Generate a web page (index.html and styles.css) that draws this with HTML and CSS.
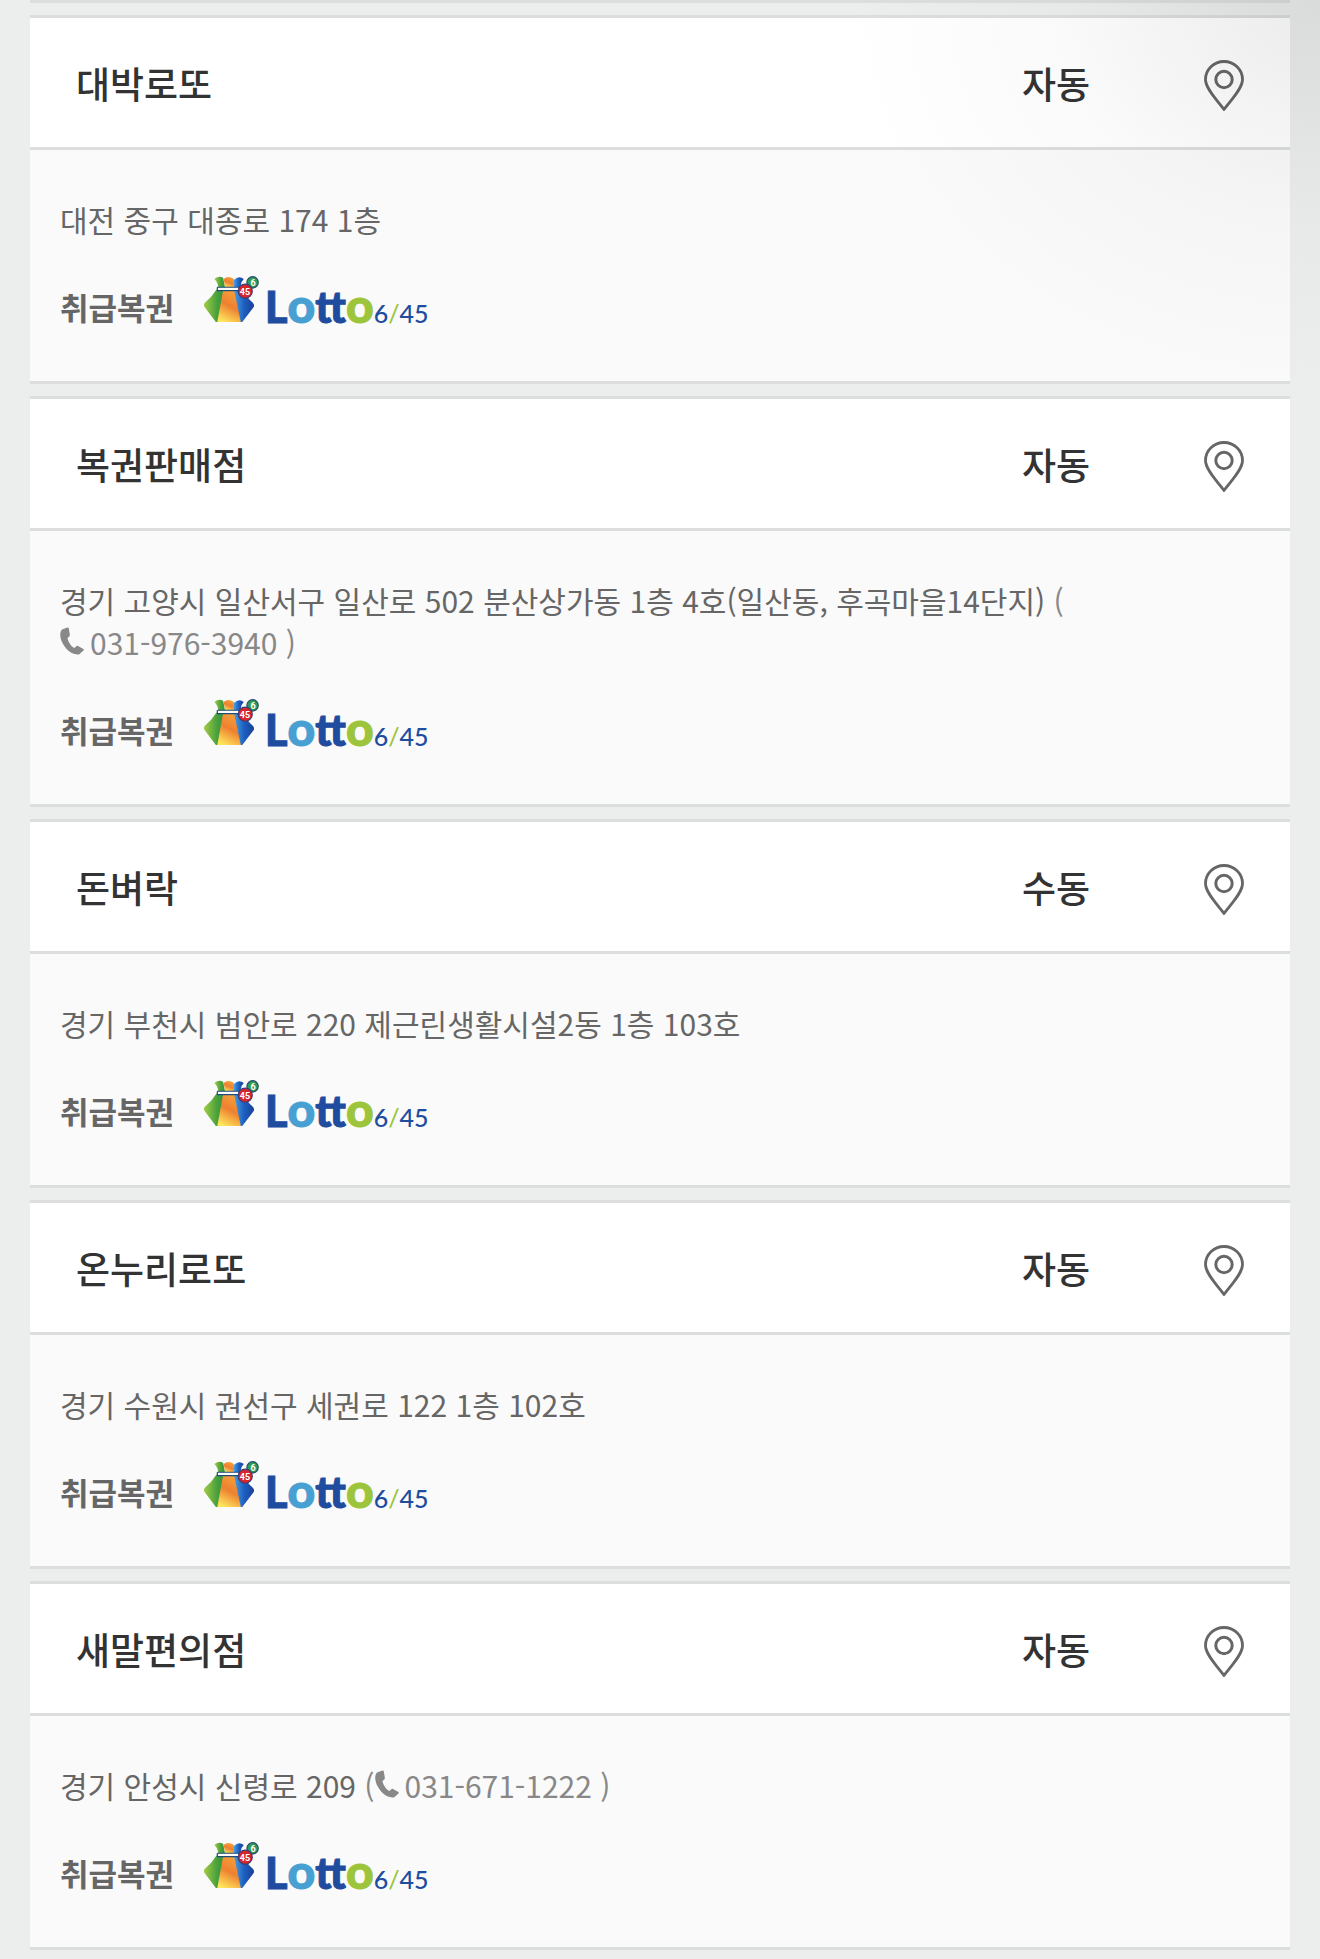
FILE: index.html
```html
<!DOCTYPE html>
<html lang="ko">
<head>
  <meta charset="UTF-8">
  <meta name="viewport" content="width=device-width, initial-scale=1.0">
  <title>로또 판매점</title>
  <link rel="stylesheet" href="styles.css">
</head>
<body>
  <!-- Shared icons -->
  <svg class="icon-defs" aria-hidden="true">
    <defs>
      <linearGradient id="bagGreen" x1="0" y1="0" x2="1" y2="0">
        <stop offset="0" stop-color="#a3cb46"/>
        <stop offset="0.6" stop-color="#4ba23c"/>
        <stop offset="1" stop-color="#2f8f43"/>
      </linearGradient>
      <linearGradient id="bagOrange" x1="0.7" y1="0" x2="0.3" y2="1">
        <stop offset="0" stop-color="#f6a43a"/>
        <stop offset="0.5" stop-color="#ee8030"/>
        <stop offset="1" stop-color="#ffe45c"/>
      </linearGradient>
      <linearGradient id="bagBlue" x1="0" y1="0" x2="1" y2="0">
        <stop offset="0" stop-color="#4a9fe0"/>
        <stop offset="0.5" stop-color="#1c5fc0"/>
        <stop offset="1" stop-color="#1b3f95"/>
      </linearGradient>
    </defs>
    <symbol id="icon-pin" viewBox="0 0 40 52">
      <path d="M20 49.500C14 41 1.500 29 1.500 19.500a18.500 18 0 0 1 37 0C38.500 29 26 41 20 49.500z" fill="none" stroke="currentColor" stroke-width="2.800" stroke-linejoin="round"/>
      <circle cx="20" cy="19.500" r="8.200" fill="none" stroke="currentColor" stroke-width="3"/>
    </symbol>
    <symbol id="icon-phone" viewBox="0 0 24 28">
      <path d="M7.500 0.500L2 2.500C-0.500 5-0.500 11 3 17C7 24 13 28 19 27.500L23.500 23.500Q24.200 22.500 23 21.800L18 19Q17 18.500 16 19.500L14.500 21C12 20.500 8 15 7.500 11L9.300 9.500Q10 8.800 9.800 7.500L8.800 1.500Q8.500 0.200 7.500 0.500z" fill="currentColor"/>
    </symbol>
    <symbol id="lotto-bag" viewBox="0 0 58 48">
      <path d="M14 14L22 14L15 47L12.500 47L0.800 31.500Q-0.500 29.500 1 27.500Q8 22 13 14z" fill="url(#bagGreen)"/>
      <path d="M20 14L32 14L39 47L14 47z" fill="url(#bagOrange)"/>
      <path d="M31 14L40 14Q44 22 50 27Q52.500 29.500 51 32L39.500 47L38 47z" fill="url(#bagBlue)"/>
      <path d="M11 3Q16-1 20 2L22 12L15 12Q15 7 11 3z" fill="url(#bagGreen)"/>
      <path d="M20.500 3Q25-1 31 3L31 12L22 12z" fill="url(#bagOrange)"/>
      <path d="M31 4Q36-1 41 3Q37 7 38 12L31 12z" fill="url(#bagBlue)"/>
      <rect x="14" y="11.500" width="23" height="3.500" rx="0.500" fill="#fff" stroke="#1c4b7c" stroke-width="1.200"/>
      <circle cx="50" cy="6.500" r="5.800" fill="#2b9c58" stroke="#274a6e" stroke-width="1.200"/>
      <circle cx="42.500" cy="15.500" r="7.200" fill="#d8252c" stroke="#3b3b6e" stroke-width="1.200"/>
    </symbol>
  </svg>

  <ul class="store-list">
    <li class="store">
      <div class="store-head">
        <h2 class="store-name">대박로또</h2>
        <span class="store-type">자동</span>
        <a class="store-map" href="#" aria-label="대박로또 지도"><svg><use href="#icon-pin"/></svg></a>
      </div>
      <div class="store-body">
        <p class="store-address">대전 중구 대종로 174 1층</p>
        <div class="store-lottery">
          <strong>취급복권</strong>
          <div class="lotto-logo">
            <svg><use href="#lotto-bag"/><text x="50" y="10">6</text><text x="42" y="19">45</text></svg>
            <span class="logo-word">L<i>o</i>tt<b>o</b></span>
            <span class="logo-number">6<b>/</b>45</span>
          </div>
        </div>
      </div>
    </li>

    <li class="store">
      <div class="store-head">
        <h2 class="store-name">복권판매점</h2>
        <span class="store-type">자동</span>
        <a class="store-map" href="#" aria-label="복권판매점 지도"><svg><use href="#icon-pin"/></svg></a>
      </div>
      <div class="store-body">
        <p class="store-address">경기 고양시 일산서구 일산로 502 분산상가동 1층 4호(일산동, 후곡마을14단지) <span class="store-phone">(<wbr><span class="phone-number"><a href="tel:031-976-3940"><svg><use href="#icon-phone"/></svg>031-976-3940</a> )</span></span></p>
        <div class="store-lottery">
          <strong>취급복권</strong>
          <div class="lotto-logo">
            <svg><use href="#lotto-bag"/><text x="50" y="10">6</text><text x="42" y="19">45</text></svg>
            <span class="logo-word">L<i>o</i>tt<b>o</b></span>
            <span class="logo-number">6<b>/</b>45</span>
          </div>
        </div>
      </div>
    </li>

    <li class="store">
      <div class="store-head">
        <h2 class="store-name">돈벼락</h2>
        <span class="store-type">수동</span>
        <a class="store-map" href="#" aria-label="돈벼락 지도"><svg><use href="#icon-pin"/></svg></a>
      </div>
      <div class="store-body">
        <p class="store-address">경기 부천시 범안로 220 제근린생활시설2동 1층 103호</p>
        <div class="store-lottery">
          <strong>취급복권</strong>
          <div class="lotto-logo">
            <svg><use href="#lotto-bag"/><text x="50" y="10">6</text><text x="42" y="19">45</text></svg>
            <span class="logo-word">L<i>o</i>tt<b>o</b></span>
            <span class="logo-number">6<b>/</b>45</span>
          </div>
        </div>
      </div>
    </li>

    <li class="store">
      <div class="store-head">
        <h2 class="store-name">온누리로또</h2>
        <span class="store-type">자동</span>
        <a class="store-map" href="#" aria-label="온누리로또 지도"><svg><use href="#icon-pin"/></svg></a>
      </div>
      <div class="store-body">
        <p class="store-address">경기 수원시 권선구 세권로 122 1층 102호</p>
        <div class="store-lottery">
          <strong>취급복권</strong>
          <div class="lotto-logo">
            <svg><use href="#lotto-bag"/><text x="50" y="10">6</text><text x="42" y="19">45</text></svg>
            <span class="logo-word">L<i>o</i>tt<b>o</b></span>
            <span class="logo-number">6<b>/</b>45</span>
          </div>
        </div>
      </div>
    </li>

    <li class="store">
      <div class="store-head">
        <h2 class="store-name">새말편의점</h2>
        <span class="store-type">자동</span>
        <a class="store-map" href="#" aria-label="새말편의점 지도"><svg><use href="#icon-pin"/></svg></a>
      </div>
      <div class="store-body">
        <p class="store-address">경기 안성시 신령로 209 <span class="store-phone">(<wbr><span class="phone-number"><a href="tel:031-671-1222"><svg><use href="#icon-phone"/></svg>031-671-1222</a> )</span></span></p>
        <div class="store-lottery">
          <strong>취급복권</strong>
          <div class="lotto-logo">
            <svg><use href="#lotto-bag"/><text x="50" y="10">6</text><text x="42" y="19">45</text></svg>
            <span class="logo-word">L<i>o</i>tt<b>o</b></span>
            <span class="logo-number">6<b>/</b>45</span>
          </div>
        </div>
      </div>
    </li>
  </ul>
</body>
</html>
```
FILE: styles.css
```css
* {
  box-sizing: border-box;
}

body {
  position: relative;
  margin: 0;
  padding: 0 30px 10px;
  background-color: #eceeee;
  color: #666;
  font-family: "Noto Sans CJK KR", sans-serif;
}

/* soft shade over the top right corner */
body::after {
  content: "";
  position: absolute;
  top: 0;
  right: 0;
  width: 480px;
  height: 400px;
  background: radial-gradient(farthest-side at top right, rgba(0, 0, 0, 0.08), rgba(0, 0, 0, 0.02) 55%, transparent);
  pointer-events: none;
}

.icon-defs {
  position: absolute;
  width: 0;
  height: 0;
}

.store-list {
  display: flex;
  flex-direction: column;
  gap: 12px;
  margin: 0;
  padding: 12px 0 0;
  border-top: 3px solid #dcdddd;
  list-style: none;
}

.store {
  border-top: 3px solid #dcdddd;
  border-bottom: 3px solid #dcdddd;
  background-color: #fafafa;
}

.store-head {
  display: flex;
  align-items: center;
  height: 132px;
  padding: 0 46px;
  border-bottom: 3px solid #dcdddd;
  background-color: #fff;
  color: #333;
}

.store-name {
  flex: 1;
  margin: 0;
  font-size: 37px;
  font-weight: 500;
}

.store-type {
  margin-right: 114px;
  font-size: 37px;
  font-weight: 500;
}

.store-map {
  display: flex;
  padding-top: 6px;
  color: #666;
}

.store-map svg {
  width: 40px;
  height: 52px;
}

.store-body {
  padding: 48px 30px 57px;
}

.store-address {
  margin: 0 0 36px;
  font-size: 30px;
  line-height: 42px;
}

.store-phone {
  color: #888;
}

.phone-number {
  white-space: nowrap;
}

.phone-number a {
  color: inherit;
  text-decoration: none;
}

.phone-number svg {
  width: 24px;
  height: 28px;
  margin-right: 6px;
}

.store-lottery {
  display: flex;
  align-items: flex-start;
  gap: 29px;
  height: 48px;
  font-size: 31px;
}

.store-lottery strong {
  padding-top: 8px;
}

.lotto-logo {
  display: flex;
  align-items: baseline;
  color: #204c9f;
}

.lotto-logo svg {
  width: 58px;
  height: 47px;
  margin-right: 4px;
}

.lotto-logo text {
  fill: #fff;
  font-family: Roboto, sans-serif;
  font-size: 9px;
  font-weight: 700;
  text-anchor: middle;
}

.lotto-logo i {
  color: #48a0d2;
  font-style: normal;
}

.lotto-logo b {
  color: #9dc53c;
  font-weight: inherit;
}

.logo-word {
  font-family: Lato, sans-serif;
  font-size: 43px;
  font-weight: 900;
  line-height: 48px;
  -webkit-text-stroke: 1px;
}

/* the round letters stand taller than the font's own x-height */
.logo-word i,
.logo-word b {
  font-size: 48px;
}

.logo-number {
  font-family: Lato, sans-serif;
  font-size: 25px;
  font-weight: 500;
  line-height: 48px;
}
```
